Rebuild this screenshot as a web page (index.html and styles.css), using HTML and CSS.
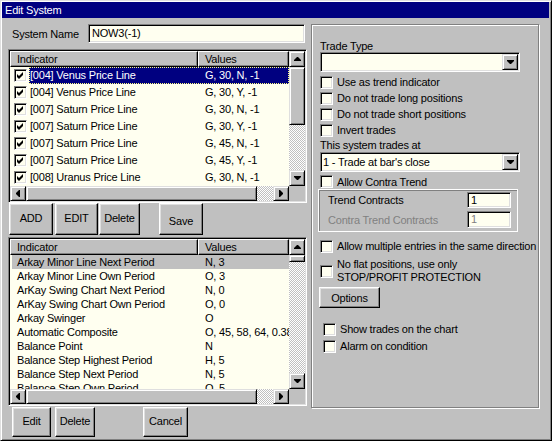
FILE: index.html
```html
<!DOCTYPE html>
<html lang="en">
<head>
    <meta charset="UTF-8">
    <title>Edit System</title>
    <link rel="stylesheet" href="styles.css">
</head>
<body>
    <div class="window">
        <div class="titlebar">Edit System</div>
        <div class="client">
            <div class="left">
                <div class="name-row">
                    <span class="name-label">System Name</span>
                    <div class="field name-field">NOW3(-1)</div>
                </div>

                <!-- indicators of the system -->
                <div class="listview top-list">
                    <div class="lv-body">
                        <div class="lv-header">
                            <div class="hd hd-ind">Indicator</div>
                            <div class="hd hd-val">Values</div>
                        </div>
                        <div class="lv-rows">
                            <div class="row"><span class="check"><svg width="9" height="9" viewBox="0 0 9 9"><polygon points="1,3 3,5 7,1 7,4 3,8 1,6"/></svg></span><div class="row-text selected focus"><span class="c-ind">[004] Venus Price Line</span><span class="c-val">G, 30, N, -1</span></div></div>
                            <div class="row"><span class="check"><svg width="9" height="9" viewBox="0 0 9 9"><polygon points="1,3 3,5 7,1 7,4 3,8 1,6"/></svg></span><div class="row-text"><span class="c-ind">[004] Venus Price Line</span><span class="c-val">G, 30, Y, -1</span></div></div>
                            <div class="row"><span class="check"><svg width="9" height="9" viewBox="0 0 9 9"><polygon points="1,3 3,5 7,1 7,4 3,8 1,6"/></svg></span><div class="row-text"><span class="c-ind">[007] Saturn Price Line</span><span class="c-val">G, 30, N, -1</span></div></div>
                            <div class="row"><span class="check"><svg width="9" height="9" viewBox="0 0 9 9"><polygon points="1,3 3,5 7,1 7,4 3,8 1,6"/></svg></span><div class="row-text"><span class="c-ind">[007] Saturn Price Line</span><span class="c-val">G, 30, Y, -1</span></div></div>
                            <div class="row"><span class="check"><svg width="9" height="9" viewBox="0 0 9 9"><polygon points="1,3 3,5 7,1 7,4 3,8 1,6"/></svg></span><div class="row-text"><span class="c-ind">[007] Saturn Price Line</span><span class="c-val">G, 45, N, -1</span></div></div>
                            <div class="row"><span class="check"><svg width="9" height="9" viewBox="0 0 9 9"><polygon points="1,3 3,5 7,1 7,4 3,8 1,6"/></svg></span><div class="row-text"><span class="c-ind">[007] Saturn Price Line</span><span class="c-val">G, 45, Y, -1</span></div></div>
                            <div class="row"><span class="check"><svg width="9" height="9" viewBox="0 0 9 9"><polygon points="1,3 3,5 7,1 7,4 3,8 1,6"/></svg></span><div class="row-text"><span class="c-ind">[008] Uranus Price Line</span><span class="c-val">G, 30, N, -1</span></div></div>
                        </div>
                    </div>
                    <div class="vscroll">
                        <div class="sb-btn"><svg width="7" height="4"><polygon points="3,0 4,0 7,3 7,4 0,4 0,3"/></svg></div>
                        <div class="thumb top-vthumb"></div>
                        <div class="track"></div>
                        <div class="sb-btn"><svg width="7" height="4"><polygon points="0,0 7,0 7,1 4,4 3,4 0,1"/></svg></div>
                    </div>
                    <div class="hscroll">
                        <div class="sb-btn"><svg width="4" height="7"><polygon points="4,0 4,7 3,7 0,4 0,3 3,0"/></svg></div>
                        <div class="thumb hthumb"></div>
                        <div class="track"></div>
                        <div class="sb-btn"><svg width="4" height="7"><polygon points="0,0 1,0 4,3 4,4 1,7 0,7"/></svg></div>
                    </div>
                    <div class="corner"></div>
                </div>

                <div class="btn-row">
                    <button class="btn btn-add">ADD</button>
                    <button class="btn btn-edit">EDIT</button>
                    <button class="btn btn-del">Delete</button>
                    <button class="btn btn-save">Save</button>
                </div>

                <!-- all available indicators -->
                <div class="listview bottom-list">
                    <div class="lv-body">
                        <div class="lv-header">
                            <div class="hd hd-ind">Indicator</div>
                            <div class="hd hd-val">Values</div>
                        </div>
                        <div class="lv-rows">
                            <div class="lrow selected-gray"><span class="c-ind">Arkay Minor Line Next Period</span><span class="c-val">N, 3</span></div>
                            <div class="lrow"><span class="c-ind">Arkay Minor Line Own Period</span><span class="c-val">O, 3</span></div>
                            <div class="lrow"><span class="c-ind">ArKay Swing Chart Next Period</span><span class="c-val">N, 0</span></div>
                            <div class="lrow"><span class="c-ind">ArKay Swing Chart Own Period</span><span class="c-val">O, 0</span></div>
                            <div class="lrow"><span class="c-ind">Arkay Swinger</span><span class="c-val">O</span></div>
                            <div class="lrow"><span class="c-ind">Automatic Composite</span><span class="c-val">O, 45, 58, 64, 0.382</span></div>
                            <div class="lrow"><span class="c-ind">Balance Point</span><span class="c-val">N</span></div>
                            <div class="lrow"><span class="c-ind">Balance Step Highest Period</span><span class="c-val">H, 5</span></div>
                            <div class="lrow"><span class="c-ind">Balance Step Next Period</span><span class="c-val">N, 5</span></div>
                            <div class="lrow"><span class="c-ind">Balance Step Own Period</span><span class="c-val">O, 5</span></div>
                        </div>
                    </div>
                    <div class="vscroll">
                        <div class="sb-btn"><svg width="7" height="4"><polygon points="3,0 4,0 7,3 7,4 0,4 0,3"/></svg></div>
                        <div class="thumb bottom-vthumb"></div>
                        <div class="track"></div>
                        <div class="sb-btn"><svg width="7" height="4"><polygon points="0,0 7,0 7,1 4,4 3,4 0,1"/></svg></div>
                    </div>
                    <div class="hscroll">
                        <div class="sb-btn"><svg width="4" height="7"><polygon points="4,0 4,7 3,7 0,4 0,3 3,0"/></svg></div>
                        <div class="thumb hthumb"></div>
                        <div class="track"></div>
                        <div class="sb-btn"><svg width="4" height="7"><polygon points="0,0 1,0 4,3 4,4 1,7 0,7"/></svg></div>
                    </div>
                    <div class="corner"></div>
                </div>

                <div class="btn-row bottom-btns">
                    <button class="btn btn-edit2">Edit</button>
                    <button class="btn btn-del2">Delete</button>
                    <button class="btn btn-cancel">Cancel</button>
                </div>
            </div>

            <div class="panel">
                <div class="plabel trade-type">Trade Type</div>
                <div class="combo">
                    <div class="combo-text"></div>
                    <div class="combo-btn"><svg width="7" height="4"><polygon points="0,0 7,0 7,1 4,4 3,4 0,1"/></svg></div>
                </div>
                <div class="cb-row first"><span class="check"></span>Use as trend indicator</div>
                <div class="cb-row"><span class="check"></span>Do not trade long positions</div>
                <div class="cb-row"><span class="check"></span>Do not trade short positions</div>
                <div class="cb-row"><span class="check"></span>Invert trades</div>
                <div class="plabel trades-at">This system trades at</div>
                <div class="combo">
                    <div class="combo-text">1 - Trade at bar's close</div>
                    <div class="combo-btn"><svg width="7" height="4"><polygon points="0,0 7,0 7,1 4,4 3,4 0,1"/></svg></div>
                </div>
                <div class="cb-row contra"><span class="check"></span>Allow Contra Trend</div>
                <div class="contracts">
                    <div class="ct-row"><span>Trend Contracts</span><div class="field ct-field">1</div></div>
                    <div class="ct-row disabled"><span>Contra Trend Contracts</span><div class="field ct-field">1</div></div>
                </div>
                <div class="cb-row multi"><span class="check"></span>Allow multiple entries in the same direction</div>
                <div class="cb-row flat"><span class="check"></span><span>No flat positions, use only<br>STOP/PROFIT PROTECTION</span></div>
                <button class="btn btn-options">Options</button>
                <div class="cb-row show"><span class="check"></span>Show trades on the chart</div>
                <div class="cb-row alarm"><span class="check"></span>Alarm on condition</div>
            </div>
        </div>
    </div>
</body>
</html>
```

FILE: styles.css
```css
* {
    box-sizing: border-box;
}

body {
    margin: 0;
    font-family: "Liberation Sans", Arial, sans-serif;
    font-size: 11px;
    letter-spacing: -0.2px;
    color: #000;
    background: #c0c0c0;
}

.window {
    width: 552px;
    height: 441px;
    background: #c0c0c0;
    border: 1px solid;
    border-color: #dfdfdf #000 #000 #dfdfdf;
    box-shadow: inset 1px 1px #fff, inset -1px -1px #808080;
    padding: 1px 2px 2px 1px;
    display: flex;
    flex-direction: column;
}

.titlebar {
    height: 16px;
    line-height: 16px;
    background: #000080;
    color: #fff;
    padding-left: 3px;
}

.client {
    display: flex;
    flex: 1;
    padding-left: 6px;
}

.left {
    width: 299px;
    display: flex;
    flex-direction: column;
}

/* sunken edit field */
.field {
    background: #fffff0;
    border: 1px solid;
    border-color: #808080 #fff #fff #808080;
    box-shadow: inset 1px 1px #000, inset -1px -1px #dfdfdf;
    padding-left: 3px;
    white-space: nowrap;
}

.name-row {
    display: flex;
    align-items: center;
    margin-top: 6px;
    height: 19px;
}

.name-label {
    width: 80px;
    padding-left: 4px;
}

.name-field {
    width: 217px;
    height: 19px;
    line-height: 17px;
}

/* list views */
.listview {
    display: grid;
    grid-template-columns: 279px 16px;
    width: 299px;
    background: #fffff0;
    border: 1px solid;
    border-color: #808080 #fff #fff #808080;
    box-shadow: inset 1px 1px #000, inset -1px -1px #dfdfdf;
    padding: 1px;
}

.top-list {
    margin-top: 6px;
    height: 154px;
    grid-template-rows: 135px 15px;
}

.bottom-list {
    margin-top: 2px;
    height: 169px;
    grid-template-rows: 150px 15px;
}

.lv-body {
    display: flex;
    flex-direction: column;
    overflow: hidden;
}

.lv-header {
    display: flex;
    height: 16px;
    flex: none;
}

.hd {
    height: 16px;
    line-height: 14px;
    background: #c0c0c0;
    border: 1px solid;
    border-color: #fff #000 #000 #fff;
    box-shadow: inset -1px -1px #808080;
    padding-left: 6px;
}

.hd-ind {
    width: 188px;
}

.hd-val {
    width: 91px;
}

.lv-rows {
    flex: 1;
    overflow: hidden;
}

.row {
    display: flex;
    height: 17px;
}

.row .check {
    margin: 2px 2px 0 4px;
}

.row-text {
    flex: 1;
    display: flex;
    height: 17px;
    line-height: 17px;
}

.row-text .c-ind {
    width: 169px;
    padding-left: 1px;
}

.c-ind,
.c-val {
    white-space: nowrap;
    overflow: hidden;
}

.c-val {
    flex: 1;
    padding-left: 7px;
}

.selected {
    background: #000080;
    color: #fff;
}

.focus {
    outline: 1px dotted #ffff80;
    outline-offset: -1px;
}

.lrow {
    display: flex;
    height: 14px;
    line-height: 14px;
    margin-left: 2px;
}

.lrow .c-ind {
    width: 186px;
    padding-left: 5px;
}

.selected-gray {
    background: #c0c0c0;
}

/* scroll bars */
.vscroll {
    display: flex;
    flex-direction: column;
}

.hscroll {
    display: flex;
}

.sb-btn,
.thumb,
.combo-btn {
    background: #c0c0c0;
    border: 1px solid;
    border-color: #dfdfdf #000 #000 #dfdfdf;
    box-shadow: inset 1px 1px #fff, inset -1px -1px #808080;
}

.sb-btn {
    flex: none;
    width: 16px;
    height: 16px;
    display: flex;
    align-items: center;
    justify-content: center;
}

.hscroll .sb-btn {
    height: 15px;
}

.sb-btn svg,
.combo-btn svg {
    display: block;
}

.top-vthumb {
    height: 58px;
    flex: none;
}

.bottom-vthumb {
    height: 7px;
    flex: none;
}

.hthumb {
    width: 231px;
    flex: none;
}

.track {
    flex: 1;
    background: repeating-conic-gradient(#fff 0 25%, #c0c0c0 0 50%) 0 0 / 2px 2px;
}

.corner {
    background: #c0c0c0;
}

/* buttons */
.btn {
    font-family: inherit;
    font-size: 11px;
    letter-spacing: -0.2px;
    color: #000;
    background: #c0c0c0;
    border: 1px solid;
    border-color: #fff #000 #000 #fff;
    box-shadow: inset -1px -1px #808080, inset 1px 1px #dfdfdf;
    padding: 0;
    margin: 0;
}

.btn-row {
    display: flex;
    height: 32px;
    flex: none;
}

.btn-row .btn {
    height: 32px;
    padding-bottom: 2px;
}

.btn-add {
    width: 44px;
    margin-left: 1px !important;
}

.btn-edit {
    width: 43px;
    margin-left: 2px !important;
}

.btn-del {
    width: 41px;
    margin-left: 1px !important;
}

.btn-row .btn-save {
    width: 44px;
    margin-left: 19px;
    padding: 4px 0 0;
}

.bottom-btns {
    margin-top: 1px;
    height: 30px;
}

.bottom-btns .btn {
    height: 30px;
}

.btn-edit2 {
    width: 39px;
    margin-left: 4px !important;
}

.btn-del2 {
    width: 40px;
    margin-left: 4px !important;
}

.btn-cancel {
    width: 45px;
    margin-left: 48px !important;
}

/* right hand settings panel */
.panel {
    margin: 6px 0 0 4px;
    width: 228px;
    height: 384px;
    border: 1px solid #808080;
    box-shadow: inset 1px 1px #fff, 1px 1px #fff;
    padding: 15px 0 0 8px;
}

.plabel {
    height: 12px;
    line-height: 12px;
}

.trades-at {
    margin-top: 1px;
    height: 13px;
    line-height: 13px;
}

.combo {
    display: flex;
    width: 200px;
    height: 20px;
    background: #fffff0;
    border: 1px solid;
    border-color: #808080 #fff #fff #808080;
    box-shadow: inset 1px 1px #000, inset -1px -1px #dfdfdf;
    padding: 1px;
}

.combo-text {
    flex: 1;
    line-height: 16px;
    padding-left: 1px;
    white-space: nowrap;
}

.combo-btn {
    width: 16px;
    height: 16px;
    display: flex;
    align-items: center;
    justify-content: center;
}

.check {
    flex: none;
    display: inline-flex;
    align-items: center;
    justify-content: center;
    width: 13px;
    height: 13px;
    background: #fffff0;
    border: 1px solid;
    border-color: #808080 #fff #fff #808080;
    box-shadow: inset 1px 1px #000, inset -1px -1px #dfdfdf;
}

.check svg {
    display: block;
}

.cb-row {
    display: flex;
    align-items: center;
    height: 16px;
    white-space: nowrap;
}

.cb-row .check {
    margin-right: 4px;
}

.cb-row.first {
    margin-top: 2px;
}

.cb-row.contra {
    margin-top: 2px;
    height: 15px;
}

.contracts {
    margin-left: -2px;
    width: 200px;
    height: 43px;
    border: 1px solid #fff;
    box-shadow: inset 1px 1px #808080;
    padding: 2px 6px 0 9px;
}

.ct-row {
    display: flex;
    align-items: center;
    justify-content: space-between;
}

.ct-field {
    width: 44px;
    height: 16px;
    line-height: 14px;
}

.ct-row.disabled {
    margin-top: 3px;
    color: #808080;
}

.ct-row.disabled .ct-field {
    height: 17px;
    line-height: 15px;
}

.cb-row.multi {
    margin-top: 6px;
}

.cb-row.flat {
    margin-top: 4px;
    height: 26px;
    line-height: 13px;
}

.btn-options {
    display: block;
    margin: 3px 0 0 -1px;
    width: 61px;
    height: 21px;
}

.cb-row.show {
    margin-top: 13px;
    padding-left: 3px;
}

.cb-row.alarm {
    margin-top: 1px;
    padding-left: 3px;
}
```
